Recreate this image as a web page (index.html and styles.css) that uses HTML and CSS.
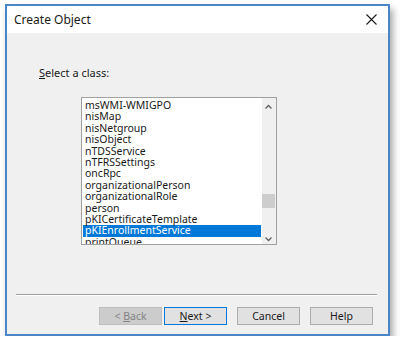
FILE: index.html
```html
<!DOCTYPE html>
<html lang="en">
<head>
    <meta charset="UTF-8">
    <title>Create Object</title>
    <link rel="stylesheet" href="styles.css">
</head>
<body>
    <div class="window">
        <div class="titlebar">
            <span class="title">Create Object</span>
            <svg class="close" width="11" height="11" viewBox="0 0 11 11">
                <path d="M0.5 0.5 L10.5 10.5 M10.5 0.5 L0.5 10.5" stroke="#1a1a1a" stroke-width="1.1" fill="none"/>
            </svg>
        </div>
        <div class="content">
            <div class="prompt"><u>S</u>elect a class:</div>
            <div class="listbox">
                <ul class="items">
                    <li>msWMI-WMIGPO</li>
                    <li>nisMap</li>
                    <li>nisNetgroup</li>
                    <li>nisObject</li>
                    <li>nTDSService</li>
                    <li>nTFRSSettings</li>
                    <li>oncRpc</li>
                    <li>organizationalPerson</li>
                    <li>organizationalRole</li>
                    <li>person</li>
                    <li>pKICertificateTemplate</li>
                    <li class="selected">pKIEnrollmentService</li>
                    <li>printQueue</li>
                </ul>
                <div class="scrollbar">
                    <svg class="arrow" width="13" height="10" viewBox="0 0 13 10">
                        <path d="M3.5 6.5 L6.5 3.5 L9.5 6.5" stroke="#606060" stroke-width="1.3" fill="none"/>
                    </svg>
                    <div class="track"><div class="thumb"></div></div>
                    <svg class="arrow" width="13" height="10" viewBox="0 0 13 10">
                        <path d="M3.5 3.5 L6.5 6.5 L9.5 3.5" stroke="#606060" stroke-width="1.3" fill="none"/>
                    </svg>
                </div>
            </div>
            <div class="separator"></div>
            <div class="buttons">
                <button class="btn" disabled>&lt; <u>B</u>ack</button>
                <button class="btn default"><u>N</u>ext &gt;</button>
                <button class="btn">Cancel</button>
                <button class="btn">Help</button>
            </div>
        </div>
    </div>
</body>
</html>
```
FILE: styles.css
```css
body {
    margin: 0;
    background-color: white;
    font-family: "Noto Sans", "Open Sans", sans-serif;
    font-size: 11px;
    color: #1a1a1a;
}
.window {
    margin: 4px 0 0 5px;
    width: 381px;
    height: 328px;
    border: 2px solid #4a86c8;
    background-color: #f0f0f0;
    box-shadow: 3px 5px 7px rgba(0,0,0,0.35);
    display: flex;
    flex-direction: column;
}
.titlebar {
    height: 27px;
    background-color: white;
    display: flex;
    align-items: center;
    justify-content: space-between;
    padding: 0 10px 0 7px;
    flex-shrink: 0;
}
.title {
    font-size: 12px;
}
.close {
    margin-right: 1px;
}
.content {
    display: flex;
    flex-direction: column;
    flex: 1;
}
.prompt {
    margin: 33px 0 0 32px;
    line-height: 14px;
}
.listbox {
    margin: 17px 0 0 74px;
    width: 194px;
    height: 146px;
    border: 1px solid #a0a0a0;
    background-color: white;
    display: flex;
    overflow: hidden;
}
.items {
    list-style: none;
    margin: 0;
    padding: 2px 1px 0 1px;
    flex: 1;
}
.items li {
    height: 11.4px;
    line-height: 11.4px;
    padding-left: 2px;
    white-space: nowrap;
    font-size: 10.5px;
}
.items li.selected {
    background-color: #0078d7;
    color: white;
}
.scrollbar {
    width: 14px;
    background-color: #f0f0f0;
    display: flex;
    flex-direction: column;
    padding-top: 4px;
}
.arrow {
    flex-shrink: 0;
}
.track {
    flex: 1;
    position: relative;
}
.thumb {
    position: absolute;
    left: 0;
    right: 1px;
    top: 82px;
    height: 14px;
    background-color: #cdcdcd;
}
.separator {
    margin: 49px 0 0 9px;
    width: 361px;
    border-top: 1px solid #a0a0a0;
    border-bottom: 1px solid white;
}
.buttons {
    margin: 11px 0 0 92px;
    display: flex;
    gap: 10px;
}
.btn {
    width: 63px;
    height: 18px;
    padding: 0;
    font-family: inherit;
    font-size: 10.5px;
    color: #1a1a1a;
    background-color: #e1e1e1;
    border: 1px solid #adadad;
}
.btn:disabled {
    background-color: #cccccc;
    border-color: #bfbfbf;
    color: #838383;
}
.btn.default {
    border-color: #0078d7;
    margin-left: -8px;
}
```
